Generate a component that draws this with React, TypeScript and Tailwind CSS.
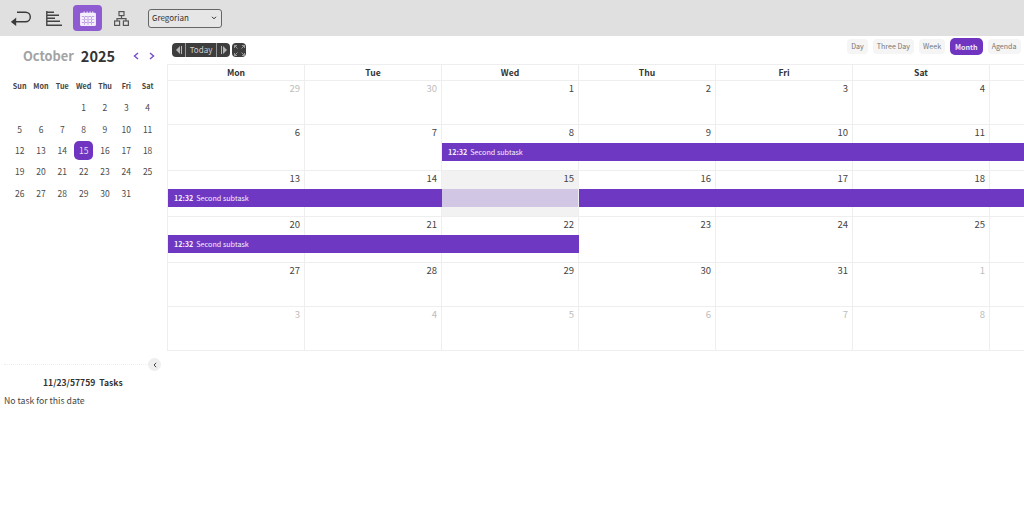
const FONT = "font-['Noto_Sans_CJK_SC','Noto_Sans',sans-serif]";

const miniWeeks = [
  ["", "", "", "1", "2", "3", "4"],
  ["5", "6", "7", "8", "9", "10", "11"],
  ["12", "13", "14", "15", "16", "17", "18"],
  ["19", "20", "21", "22", "23", "24", "25"],
  ["26", "27", "28", "29", "30", "31", ""],
];

type Row = {
  days: { n: number; off?: boolean; today?: boolean }[];
  height: string;
  bar?: string;
};

const mk = (nums: number[], off: number[] = [], today?: number) =>
  nums.map((n, i) => ({ n, off: off.includes(i), today: today === i }));

const rows: Row[] = [
  { days: mk([29, 30, 1, 2, 3, 4], [0, 1]), height: "h-[44px]" },
  { days: mk([6, 7, 8, 9, 10, 11]), height: "h-[46px]", bar: "left-[274px] right-0" },
  { days: mk([13, 14, 15, 16, 17, 18], [], 2), height: "h-[46px]", bar: "left-0 right-0" },
  { days: mk([20, 21, 22, 23, 24, 25]), height: "h-[46px]", bar: "left-0 w-[411px]" },
  { days: mk([27, 28, 29, 30, 31, 1], [5]), height: "h-[44px]" },
  { days: mk([3, 4, 5, 6, 7, 8], [0, 1, 2, 3, 4, 5]), height: "h-[44px]" },
];

function Toolbar() {
  return (
    <div className="flex h-9 items-center bg-[#e0e0e0] pl-[11px]">
      <svg width="20" height="15" viewBox="0 0 20 15" fill="none" stroke="#3a3a3a" strokeWidth="1.400" className="mr-[15px]">
        <path d="M6 1.200h8.500a4.700 4.700 0 0 1 0 9.600H3" />
        <path d="M4.500 8 1 10.800l3.500 2.800z" fill="#3a3a3a" />
      </svg>
      <svg width="16" height="15" viewBox="0 0 16 15" fill="none" stroke="#444" strokeWidth="1.400" className="mr-[11px]">
        <path d="M.8 0v15M1 1.200h7M1 4.200h12M1 7.200h8M1 10.200h13M1 14.200h15" />
      </svg>
      <div className="mr-[12px] flex h-[26px] w-[29px] items-center justify-center rounded-[4px] bg-[#8e5bd0]">
        <svg width="16" height="15" viewBox="0 0 18 17" fill="#f4effa">
          <path d="M1.500 2H4V.5h1.200V2h2.200V.5h1.200V2h2.200V.5h1.200V2h1.800V.5H15V2h1.500A1.500 1.500 0 0 1 18 3.500V15.500A1.500 1.500 0 0 1 16.500 17h-15A1.500 1.500 0 0 1 0 15.500V3.500A1.500 1.500 0 0 1 1.500 2z" />
          <path d="M2 6h14v.9H2zM4.600 6v9.500h.8V6zM8.600 6v9.500h.8V6zM12.600 6v9.500h.8V6zM2 9.500h14v.8H2zM2 12.800h14v.8H2z" fill="#a985dc" />
        </svg>
      </div>
      <svg width="15" height="15" viewBox="0 0 15 15" fill="none" stroke="#555" strokeWidth="1.200" className="mr-[19px]">
        <rect x="5" y="0.600" width="5" height="4" />
        <rect x="0.600" y="10" width="5" height="4.400" />
        <rect x="9.400" y="10" width="5" height="4.400" />
        <path d="M7.500 4.600v3M3 10V7.600h9V10" />
      </svg>
      <div className="flex h-[19px] w-[74px] items-center justify-between rounded-[3px] border border-[#666] bg-[#e6e6e6] pl-[3px] pr-[4px] text-[8px] text-[#333]">
        <span>Gregorian</span>
        <svg width="6" height="4" viewBox="0 0 7 5" fill="none" stroke="#222" strokeWidth="1.200">
          <path d="M1 1l2.500 2.500L6 1" />
        </svg>
      </div>
    </div>
  );
}

function MiniCalendar() {
  return (
    <div>
      <div className="flex h-[20px] items-center pl-[23px]">
        <span className="text-[12.800px] font-bold text-[#a3a3a3]">October</span>
        <span className="ml-[7px] text-[14.500px] font-bold text-[#333]">2025</span>
        <svg width="6" height="8" viewBox="0 0 6 8" fill="none" stroke="#7b4fc8" strokeWidth="1.500" className="ml-[18px]">
          <path d="M5 1 1.500 4 5 7" />
        </svg>
        <svg width="6" height="8" viewBox="0 0 6 8" fill="none" stroke="#7b4fc8" strokeWidth="1.500" className="ml-[10px]">
          <path d="M1 1l3.500 3L1 7" />
        </svg>
      </div>
      <div className="mt-[14px] grid grid-cols-[repeat(7,21.330px)] pl-[9px]">
        {["Sun", "Mon", "Tue", "Wed", "Thu", "Fri", "Sat"].map((d) => (
          <div key={d} className="flex h-[12px] items-center justify-center text-[7.200px] font-semibold text-[#444]">
            {d}
          </div>
        ))}
      </div>
      <div className="mt-[5px] grid grid-cols-[repeat(7,21.330px)] auto-rows-[21.330px] pl-[9px]">
        {miniWeeks.flat().map((d, i) => (
          <div key={i} className="flex items-center justify-center text-[8.500px] text-[#4a4a4a]">
            {d === "15" ? (
              <span className="flex h-[19px] w-[19px] items-center justify-center rounded-[5px] bg-[#6f35c0] text-[#e8def5]">
                {d}
              </span>
            ) : (
              d
            )}
          </div>
        ))}
      </div>
    </div>
  );
}

function TaskPanel() {
  return (
    <div className="relative">
      <div className="ml-[4px] mr-[17px] border-t border-dotted border-[#eee]" />
      <div className="absolute right-[6px] top-[-6px] flex h-[13px] w-[13px] items-center justify-center rounded-full bg-[#eee]">
        <svg width="4" height="6" viewBox="0 0 4 6" fill="none" stroke="#444" strokeWidth="1">
          <path d="M3.200.8 1 3l2.200 2.200" />
        </svg>
      </div>
      <div className="mt-[11px] pl-[43px] text-[8.600px] font-bold leading-[13px] text-[#333]">
        11/23/57759&nbsp;&nbsp;Tasks
      </div>
      <div className="mt-[5px] pl-[4px] text-[8.700px] leading-[13px] text-[#444]">No task for this date</div>
    </div>
  );
}

function ViewButton({ label }: { label: string }) {
  return <span className="rounded-[4px] bg-[#f5f5f5] px-[4px] py-[1px] leading-[13px]">{label}</span>;
}

function CalendarControls() {
  return (
    <div className="flex h-[28px] items-start justify-between pt-[2px]">
      <div className="mt-[5px] ml-[5px] flex items-center gap-[2px]">
        <div className="flex h-[14px] w-[58px] items-center rounded-[4px] bg-[#3d3d3d] text-[8px] text-[#ccc]">
          <span className="flex h-full w-[14px] items-center justify-center gap-[1px] border-r border-[#999]">
            <svg width="4" height="8" viewBox="0 0 4 8" fill="#b5b5b5">
              <path d="M4 0v8L0 4z" />
            </svg>
            <span className="h-[8px] w-[1px] bg-[#b5b5b5]" />
          </span>
          <span className="flex-1 text-center leading-[14px]">Today</span>
          <span className="flex h-full w-[14px] items-center justify-center gap-[1px] border-l border-[#999]">
            <span className="h-[8px] w-[1px] bg-[#b5b5b5]" />
            <svg width="4" height="8" viewBox="0 0 4 8" fill="#b5b5b5">
              <path d="M0 0v8L4 4z" />
            </svg>
          </span>
        </div>
        <div className="flex h-[14px] w-[14px] items-center justify-center rounded-[4px] bg-[#3d3d3d]">
          <svg width="11" height="11" viewBox="0 0 11 11" fill="none" stroke="#a5a5a5" strokeWidth="0.900">
            <path d="M.500 .500 3.500 3.500M10.500 .500 7.500 3.500M.500 10.500 3.500 7.500M10.500 10.500 7.500 7.500M.500 3V.500H3M8 .500h2.500V3M.500 8v2.500H3M8 10.500h2.500V8" />
          </svg>
        </div>
      </div>
      <div className="mr-[3.500px] flex items-center gap-[5px] text-[7.100px] text-[#777]">
        <ViewButton label="Day" />
        <ViewButton label="Three Day" />
        <ViewButton label="Week" />
        <span className="rounded-[5px] bg-[#6f35c0] px-[5px] py-[1.500px] font-semibold leading-[14px] text-[#f0e8fa]">
          Month
        </span>
        <ViewButton label="Agenda" />
      </div>
    </div>
  );
}

function MonthGrid() {
  return (
    <div className="border-t border-l border-[#eeeeee]">
      <div className="grid h-[16px] grid-cols-[repeat(6,137px)_1fr] border-b border-[#eee]">
        {["Mon", "Tue", "Wed", "Thu", "Fri", "Sat", ""].map((d, i) => (
          <div
            key={i}
            className="flex items-center justify-center border-r border-[#eee] text-[8.600px] font-bold text-[#333] last:border-r-0"
          >
            {d}
          </div>
        ))}
      </div>
      {rows.map((row, r) => (
        <div
          key={r}
          className={`relative grid grid-cols-[repeat(6,137px)_1fr] border-b border-[#eee] ${row.height}`}
        >
          {row.days.map((d, i) => (
            <div
              key={i}
              className={`border-r border-[#eee] pr-[4px] text-right text-[9.500px] leading-[14px] ${
                d.off ? "text-[#bdbdbd]" : "text-[#444]"
              } ${d.today ? "relative z-10 bg-[#eeeeee]/[0.78]" : ""}`}
            >
              {d.n}
            </div>
          ))}
          <div />
          {row.bar && (
            <div
              className={`absolute top-[18px] flex h-[18px] items-center bg-[#6f38c2] pl-[6px] text-[7.200px] text-[#f5f0fb] ${row.bar}`}
            >
              <span className="mr-[3px] font-bold">12:32</span>
              <span>Second subtask</span>
            </div>
          )}
        </div>
      ))}
    </div>
  );
}

export default function App() {
  return (
    <div className={`${FONT} h-[505px] w-[1024px] overflow-hidden bg-white`}>
      <Toolbar />
      <div className="flex">
        <aside className="flex h-[469px] w-[167px] shrink-0 flex-col">
          <div className="h-[328px] pt-[10px]">
            <MiniCalendar />
          </div>
          <TaskPanel />
        </aside>
        <main className="flex-1">
          <CalendarControls />
          <MonthGrid />
        </main>
      </div>
    </div>
  );
}
